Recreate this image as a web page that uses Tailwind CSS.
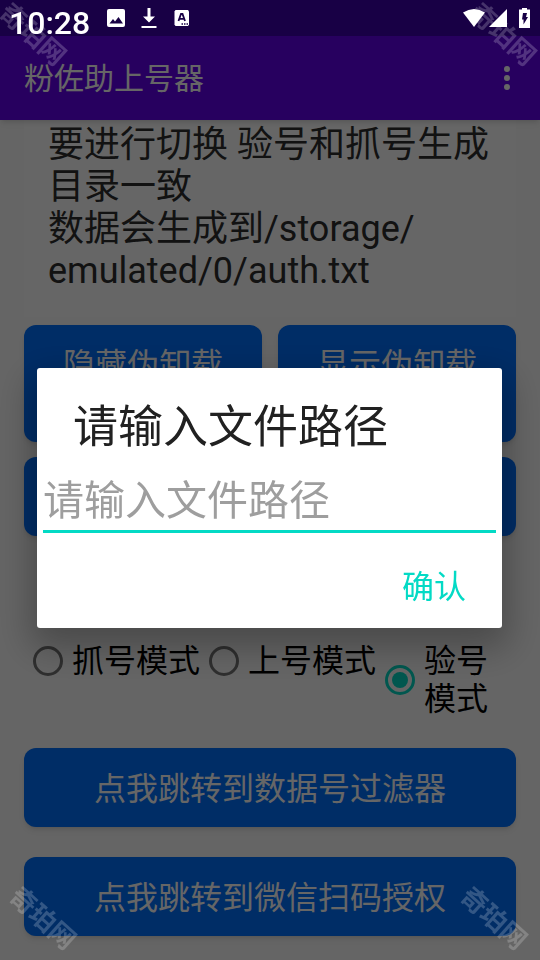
<!DOCTYPE html>
<html lang="zh-CN">
<head>
<meta charset="utf-8">
<meta name="viewport" content="width=device-width, initial-scale=1">
<title>粉佐助上号器</title>
<script src="https://cdn.jsdelivr.net/npm/@tailwindcss/browser@4"></script>
</head>
<body class="relative flex h-screen flex-col overflow-hidden bg-[#fcfcfc] font-['Roboto','Noto_Sans_CJK_SC',sans-serif] text-black">

<!-- App bar under the status bar -->
<header class="relative z-10 bg-[#6200ee] pt-9 shadow-md">
  <div class="absolute inset-x-0 top-0 h-9 bg-[#3c00ad]"></div>
  <div class="flex h-[84px] items-center justify-between pr-6 pl-6">
    <h1 class="pt-0.5 text-[30px] leading-9 text-white">粉佐助上号器</h1>
    <button type="button" aria-label="更多选项" class="flex h-12 w-[18px] items-center justify-center">
      <svg viewBox="0 0 6 24" class="h-6 w-[6px]" fill="#fff"><circle cx="3" cy="3" r="3"/><circle cx="3" cy="12" r="3"/><circle cx="3" cy="21" r="3"/></svg>
    </button>
  </div>
</header>

<main class="flex flex-col px-6">
  <section class="bg-white px-6 pt-1 pb-[25px]">
    <p class="text-[36px] leading-[42px] text-[#2d2d2d]">要进行切换 验号和抓号生成<br>目录一致<br>数据会生成到/storage/<br>emulated/0/auth.txt</p>
  </section>

  <div class="mt-2 grid grid-cols-2 gap-4">
    <button type="button" class="rounded-xl bg-[#0070ff] px-6 pt-[21px] pb-[58px] text-[32px] leading-[38px] text-white shadow-md">隐藏伪卸载</button>
    <button type="button" class="rounded-xl bg-[#0070ff] px-6 pt-[21px] pb-[58px] text-[32px] leading-[38px] text-white shadow-md">显示伪卸载</button>
  </div>
  <button type="button" aria-label="文件路径" class="mt-[15px] h-[79px] rounded-xl bg-[#0070ff] shadow-md"></button>

  <fieldset class="mt-[106px] flex items-start gap-[9px] pr-6 pl-[9px] text-[32px] leading-[38px]">
    <legend class="sr-only">模式</legend>
    <label class="flex shrink-0 items-center gap-[9px]">
      <input type="radio" name="mode" class="size-[30px] shrink-0 appearance-none rounded-full border-3 border-[#757575]">抓号模式
    </label>
    <label class="flex shrink-0 items-center gap-[9px]">
      <input type="radio" name="mode" class="size-[30px] shrink-0 appearance-none rounded-full border-3 border-[#757575]">上号模式
    </label>
    <label class="flex items-center gap-[9px]">
      <input type="radio" name="mode" checked class="size-[30px] shrink-0 appearance-none rounded-full border-3 border-[#03dac5] bg-[#03dac5] bg-clip-content p-[4px]">验号模式
    </label>
  </fieldset>

  <button type="button" class="mt-[30px] h-[79px] rounded-xl bg-[#0070ff] pt-0.5 text-[32px] leading-[38px] text-white shadow-md">点我跳转到数据号过滤器</button>
  <button type="button" class="mt-[30px] h-[79px] rounded-xl bg-[#0070ff] pt-0.5 text-[32px] leading-[38px] text-white shadow-md">点我跳转到微信扫码授权</button>
</main>

<!-- Scrim and dialog -->
<div class="fixed inset-0 z-20 flex items-center bg-black/60 pt-9 pr-[38px] pl-[37px]">
  <form role="dialog" aria-labelledby="dialog-title" class="w-full rounded-[3px] bg-white pt-[30px] pb-[17px] shadow-[0_14px_36px_6px_rgba(0,0,0,0.28)]">
    <h2 id="dialog-title" class="px-9 text-[45px] leading-[60px] text-[#212121]">请输入文件路径</h2>
    <div class="mt-3 px-[6px]">
      <input type="text" aria-labelledby="dialog-title" placeholder="请输入文件路径" class="block h-[63px] w-full border-b-3 border-[#03dac5] pt-0.5 text-[41px] outline-none placeholder:text-[#9e9e9e]">
    </div>
    <div class="mt-[30px] flex justify-end px-9">
      <button type="button" class="h-12 text-[32px] leading-[48px] text-[#03dac5]">确认</button>
    </div>
  </form>
</div>

<!-- Status bar -->
<div class="fixed inset-x-0 top-0 z-30 flex h-9 items-center justify-between pr-[10px] pl-[9px] text-white">
  <div class="flex items-center">
    <time class="pt-2.5 text-[32px] leading-9 font-medium">10:28</time>
    <svg viewBox="0 0 18 18" class="ml-[17px] size-[18px]"><rect width="18" height="18" rx="2" fill="#fff"/><path d="M2.500 14.500 6 10l2 2.500L11.500 8l4.500 6.500z" fill="#180045"/></svg>
    <svg viewBox="0 0 16 22" class="ml-4 h-[22px] w-4" fill="#fff"><path d="M6.500 1h3v8.500H14l-6 6-6-6h4.500zM.5 19h15v2H.5z"/></svg>
    <svg viewBox="0 0 16 18" class="ml-[17px] h-[18px] w-4"><path d="M1.500 1h12.500l1 1.500v13L14 17H1.500L.5 15.500v-13z" fill="#fff"/><path d="M4.500 12 7 5h1.500L11 12M5.500 9.800h4.500" fill="none" stroke="#180045" stroke-width="1.800"/><path d="M7.500 14.200H9v1.500H7.500zM10 14.200h1.500v1.500H10zM12.500 14.200H14v1.500h-1.500z" fill="#180045"/></svg>
  </div>
  <div class="flex items-center">
    <svg viewBox="0 0 22 18" class="h-[18px] w-[22px]" fill="#fff"><path d="M0 3.500Q11-3.500 22 3.500L11 18z"/></svg>
    <svg viewBox="0 0 18 18" class="ml-1 size-[18px]" fill="#fff"><path d="M18 0v18H0z"/></svg>
    <svg viewBox="0 0 11 20" class="ml-3 h-5 w-[11px]"><path d="M3 0h5v1.500h3V20H0V1.500h3z" fill="#fff"/><path d="M4 5h4L7 9h2l-4.500 7.500V11.500H3z" fill="#180045"/></svg>
  </div>
</div>

<!-- Watermarks -->
<div aria-hidden="true" class="pointer-events-none fixed inset-0 z-40 font-['Noto_Sans_CJK_SC',sans-serif] text-[26px] leading-[30px] font-bold whitespace-nowrap text-white/20">
  <span class="absolute top-[18px] -left-[5px] rotate-[42deg]">奇珀网</span>
  <span class="absolute top-[18px] -right-[3px] rotate-[42deg]">奇珀网</span>
  <span class="absolute bottom-7 left-[5px] rotate-[42deg]">奇珀网</span>
  <span class="absolute right-[6px] bottom-7 rotate-[42deg]">奇珀网</span>
</div>
</body>
</html>
